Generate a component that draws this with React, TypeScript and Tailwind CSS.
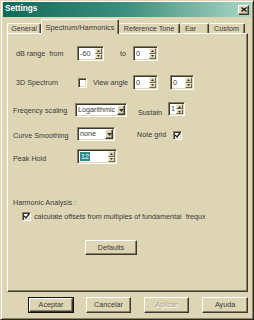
import React from "react";

const BG = "bg-[#ddd5b4]";

function Sunken({ className, children }: { className: string; children?: React.ReactNode }) {
  return (
    <div
      className={`flex border border-t-[#8a8168] border-l-[#8a8168] border-b-white border-r-white shadow-[inset_1px_1px_0_#3c382c,inset_-1px_-1px_0_#ddd5b4] bg-white ${className}`}
    >
      {children}
    </div>
  );
}

function Raised({ className, children }: { className: string; children?: React.ReactNode }) {
  return (
    <div
      className={`flex items-center justify-center ${BG} border border-t-white border-l-white border-b-[#3c382c] border-r-[#3c382c] shadow-[inset_-1px_-1px_0_#8a8168] ${className}`}
    >
      {children}
    </div>
  );
}

function SpinPart({ children }: { children?: React.ReactNode }) {
  return (
    <div className={`flex-1 w-full flex items-center justify-center ${BG} border border-t-[#f4f0e0] border-l-[#f4f0e0] border-b-[#6e664e] border-r-[#6e664e]`}>
      {children}
    </div>
  );
}

function Arrow({ up }: { up?: boolean }) {
  return (
    <svg width="3" height="2" viewBox="0 0 3 2">
      {up ? <polygon points="1.5,0 3,2 0,2" fill="#333" /> : <polygon points="0,0 3,0 1.5,2" fill="#333" />}
    </svg>
  );
}

function Spin({ className, value, selected }: { className: string; value: string; selected?: boolean }) {
  return (
    <Sunken className={className}>
      <div className="flex-1 flex items-center pl-[2px] text-[7.2px] text-[#3a3a3a] leading-none">
        {selected ? <span className="bg-[#2f8a8c] text-white px-[1px] py-[1px]">{value}</span> : <span>{value}</span>}
      </div>
      <div className="flex flex-col w-[8px] p-[1px] pl-0">
        <SpinPart>
          <Arrow up />
        </SpinPart>
        <SpinPart>
          <Arrow />
        </SpinPart>
      </div>
    </Sunken>
  );
}

function Select({ className, value }: { className: string; value: string }) {
  return (
    <Sunken className={className}>
      <div className="flex-1 flex items-center pl-[2px] text-[7.2px] text-[#3a3a3a] leading-none">{value}</div>
      <div className="flex w-[9px] p-[1px] pl-0">
        <Raised className="flex-1">
          <svg width="5" height="3" viewBox="0 0 5 3">
            <polygon points="0,0 5,0 2.5,3" fill="#333" />
          </svg>
        </Raised>
      </div>
    </Sunken>
  );
}

function Check({ className, checked }: { className: string; checked?: boolean }) {
  return (
    <Sunken className={`items-center justify-center ${className}`}>
      {checked && (
        <svg width="7" height="7" viewBox="0 0 7 7">
          <polyline points="1,3 3,5 6,1" fill="none" stroke="#222" strokeWidth="1.3" />
        </svg>
      )}
    </Sunken>
  );
}

function Btn({ className, label, def, disabled }: { className: string; label: string; def?: boolean; disabled?: boolean }) {
  const inner = (
    <Raised className="w-full h-full">
      <span
        className={`text-[7.2px] leading-none ${disabled ? "text-[#aaa28a] [text-shadow:1px_1px_0_#fff]" : "text-[#3a3a3a]"}`}
      >
        {label}
      </span>
    </Raised>
  );
  return def ? <div className={`border border-[#111] ${className}`}>{inner}</div> : <div className={className}>{inner}</div>;
}

export default function App() {
  return (
    <div
      className={`w-[254px] h-[320px] ${BG} border border-t-[#ddd5b4] border-l-[#ddd5b4] border-b-[#2a2820] border-r-[#2a2820] shadow-[inset_1px_1px_0_#fff,inset_-1px_-1px_0_#8a8168] p-[2px] pt-[1px] flex flex-col text-[#3a3a3a]`}
      style={{ fontFamily: '"Liberation Sans", Arial, sans-serif' }}
    >
      {/* Title bar */}
      <div className="h-[15px] flex items-center justify-between bg-gradient-to-r from-[#0b6a5a] via-[#3d8f7e] to-[#a9d7c6] pl-[2px] pr-[2px]">
        <span className="text-white font-bold text-[8.2px] leading-none">Settings</span>
        <Raised className="w-[11px] h-[10px]">
          <svg width="6" height="5" viewBox="0 0 6 5">
            <path d="M0.5 0.5 L5.5 4.5 M5.5 0.5 L0.5 4.5" stroke="#111" strokeWidth="1.3" />
          </svg>
        </Raised>
      </div>

      {/* Tabs */}
      <div className="h-[14px] mt-[2px] flex items-end pl-[4px] relative z-10">
        <div className="w-[34px] h-[10px] flex items-center justify-center border-t border-l border-white border-r border-r-[#3c382c] rounded-t-[2px] text-[7.2px] leading-none shadow-[inset_-1px_0_0_#8a8168]">
          General
        </div>
        <div className={`w-[78px] h-[15px] -mb-[1px] ${BG} flex items-start pt-[4px] justify-center border-t border-l border-white border-r border-r-[#3c382c] rounded-t-[2px] text-[7.4px] leading-none shadow-[inset_-1px_0_0_#8a8168]`}>
          Spectrum/Harmonics
        </div>
        <div className="w-[61px] h-[10px] flex items-center justify-center border-t border-white border-r border-r-[#3c382c] rounded-t-[2px] text-[7.2px] leading-none shadow-[inset_-1px_0_0_#8a8168]">
          Reference Tone
        </div>
        <div className="w-[29px] h-[10px] flex items-center pl-[5px] border-t border-white border-r border-r-[#3c382c] rounded-t-[2px] text-[7.2px] leading-none shadow-[inset_-1px_0_0_#8a8168]">
          Ear
        </div>
        <div className="w-[36px] h-[10px] flex items-center justify-center border-t border-white border-r border-r-[#3c382c] rounded-t-[2px] text-[7.2px] leading-none shadow-[inset_-1px_0_0_#8a8168]">
          Custom
        </div>
      </div>

      {/* Panel */}
      <div className="ml-[4px] w-[241px] h-[259px] border border-t-white border-l-white border-b-[#3c382c] border-r-[#3c382c] shadow-[inset_-1px_-1px_0_#8a8168] flex flex-col text-[7.2px] leading-none">
        {/* Row 1 */}
        <div className="mt-[12px] h-[15px] flex items-center">
          <span className="w-[69px] pl-[8px] whitespace-pre">dB range  from</span>
          <Spin className="w-[27px] h-[15px]" value="-60" />
          <span className="w-[29px] pl-[16px]">to</span>
          <Spin className="w-[25px] h-[15px]" value="0" />
        </div>
        {/* Row 2 */}
        <div className="mt-[14px] h-[15px] flex items-center">
          <span className="w-[70px] pl-[8px] pt-[1px]">3D Spectrum</span>
          <Check className="w-[9px] h-[10px]" />
          <span className="w-[46px] pl-[6px]">View angle</span>
          <Spin className="w-[25px] h-[15px]" value="0" />
          <div className="w-[12px]" />
          <Spin className="w-[24px] h-[15px]" value="0" />
        </div>
        {/* Row 3 */}
        <div className="mt-[12px] h-[15px] flex items-start">
          <span className="w-[67px] pl-[5px] pt-[5px]">Freqency scaling</span>
          <Select className="w-[52px] h-[14px] mt-[1px]" value="Logarithmic" />
          <span className="w-[41px] pl-[11px] pt-[7px]">Sustain</span>
          <Spin className="w-[17px] h-[14px]" value="1" />
        </div>
        {/* Row 4 */}
        <div className="mt-[10px] h-[14px] flex items-start">
          <span className="w-[69px] pl-[5px] pt-[5px]">Curve Smoothing</span>
          <Select className="w-[38px] h-[14px]" value="none" />
          <span className="w-[58px] pl-[22px] pt-[4px]">Note grid</span>
          <Check className="w-[9px] h-[9px] mt-[4px]" checked />
        </div>
        {/* Row 5 */}
        <div className="mt-[8px] h-[15px] flex items-center">
          <span className="w-[69px] pl-[5px] pt-[4px]">Peak Hold</span>
          <Spin className="w-[40px] h-[15px]" value="12" selected />
        </div>
        {/* Harmonic */}
        <div className="mt-[34px] h-[9px] flex items-center pl-[5px]">Harmonic Analysis :</div>
        <div className="mt-[5px] h-[9px] flex items-center">
          <div className="w-[14px]" />
          <Check className="w-[9px] h-[9px]" checked />
          <span className="pl-[3px] whitespace-pre">calculate offsets from multiples of fundamental  frequx</span>
        </div>
        <div className="mt-[19px] flex">
          <div className="w-[77px]" />
          <Btn className="w-[52px] h-[15px]" label="Defaults" />
        </div>
      </div>

      {/* Buttons */}
      <div className="mt-[5px] h-[16px] flex">
        <div className="w-[25px]" />
        <Btn className="w-[46px] h-[16px]" label="Aceptar" def />
        <div className="w-[12px]" />
        <Btn className="w-[45px] h-[16px]" label="Cancelar" />
        <div className="w-[13px]" />
        <Btn className="w-[45px] h-[16px]" label="Aplicar" disabled />
        <div className="w-[13px]" />
        <Btn className="w-[46px] h-[16px]" label="Ayuda" />
      </div>
    </div>
  );
}
